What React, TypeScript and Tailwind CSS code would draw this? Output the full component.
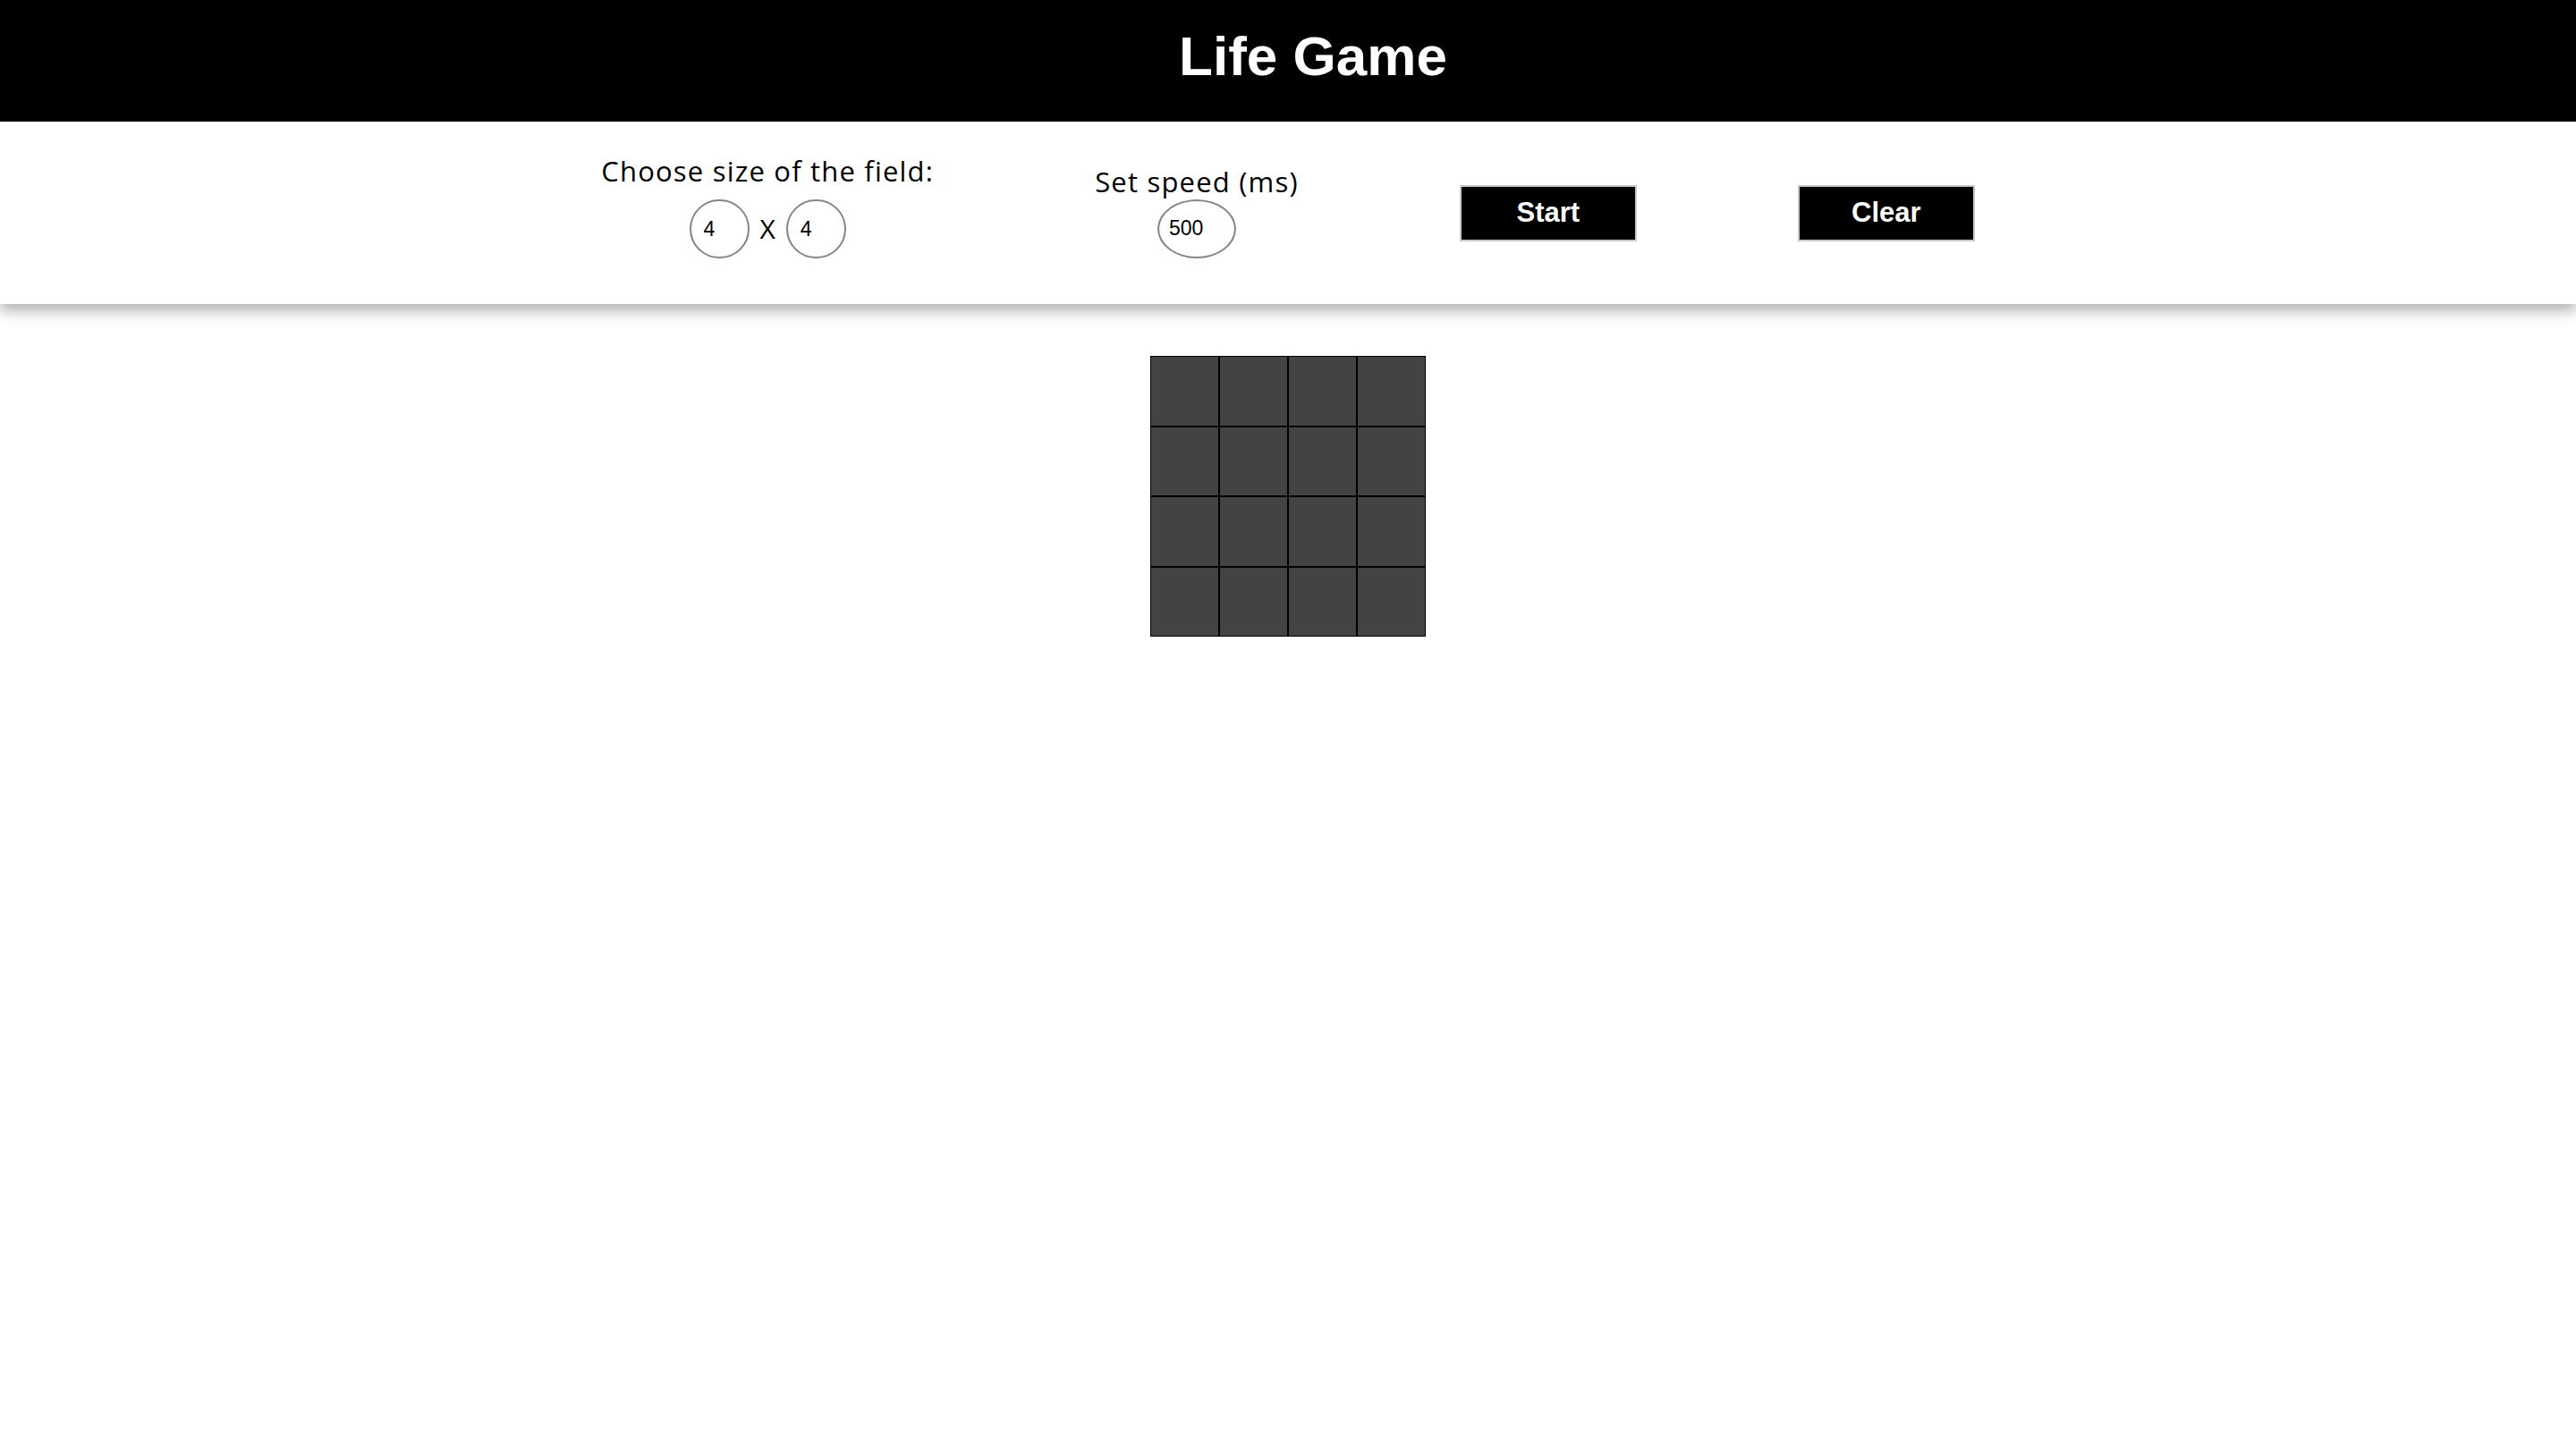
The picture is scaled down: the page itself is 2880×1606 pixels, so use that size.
import { useState } from 'react'

const SIZE = 4

export default function App() {
  const [rows, setRows] = useState('4')
  const [cols, setCols] = useState('4')
  const [speed, setSpeed] = useState('500')
  const cells = Array.from({ length: SIZE * SIZE }, (_, i) => i)

  return (
    <div className="min-h-screen bg-white">
      {/* Header */}
      <header className="flex h-[136px] items-center justify-center bg-black pb-[10px]">
        <h1 className="ml-[56px] text-[62px] font-bold leading-none text-white [font-family:'Liberation_Sans',sans-serif]">
          Life Game
        </h1>
      </header>

      {/* Controls */}
      <div className="relative z-10 flex h-[204px] items-center justify-center gap-[180px] bg-white shadow-[0_8px_14px_rgba(0,0,0,0.3)] [font-family:'Open_Sans',sans-serif]">
        <div className="mb-[14px] flex flex-col items-center">
          <span className="text-[31px] leading-[36px] tracking-[1.2px] text-black">Choose size of the field:</span>
          <div className="mt-[14px] flex items-center gap-[12px]">
            <input
              value={rows}
              onChange={(e) => setRows(e.target.value)}
              className="h-[66px] w-[67px] rounded-full border-2 border-[#858585] pl-[14px] text-[23px] outline-none [font-family:'Liberation_Sans',sans-serif]"
            />
            <span className="text-[30px] leading-none text-black">X</span>
            <input
              value={cols}
              onChange={(e) => setCols(e.target.value)}
              className="h-[66px] w-[67px] rounded-full border-2 border-[#858585] pl-[14px] text-[23px] outline-none [font-family:'Liberation_Sans',sans-serif]"
            />
          </div>
        </div>

        <div className="mb-[3px] flex flex-col items-center">
          <span className="text-[31px] leading-[36px] tracking-[1.2px] text-black">Set speed (ms)</span>
          <input
            value={speed}
            onChange={(e) => setSpeed(e.target.value)}
            className="mt-[2px] h-[66px] w-[88px] rounded-[50%] border-2 border-[#858585] pl-[11px] text-[23px] outline-none [font-family:'Liberation_Sans',sans-serif]"
          />
        </div>

        <button className="h-[63px] w-[198px] border-2 border-[#c8c8c8] bg-black text-[31px] font-bold text-white [font-family:'Liberation_Sans',sans-serif]">
          Start
        </button>
        <button className="h-[63px] w-[198px] border-2 border-[#c8c8c8] bg-black text-[31px] font-bold text-white [font-family:'Liberation_Sans',sans-serif]">
          Clear
        </button>
      </div>

      {/* Field */}
      <div className="mt-[58px] flex justify-center">
        <div className="grid grid-cols-[repeat(4,77px)]">
          {cells.map((i) => (
            <div key={i} className="h-[78.5px] w-[77px] border border-black bg-[#434343]" />
          ))}
        </div>
      </div>
    </div>
  )
}
